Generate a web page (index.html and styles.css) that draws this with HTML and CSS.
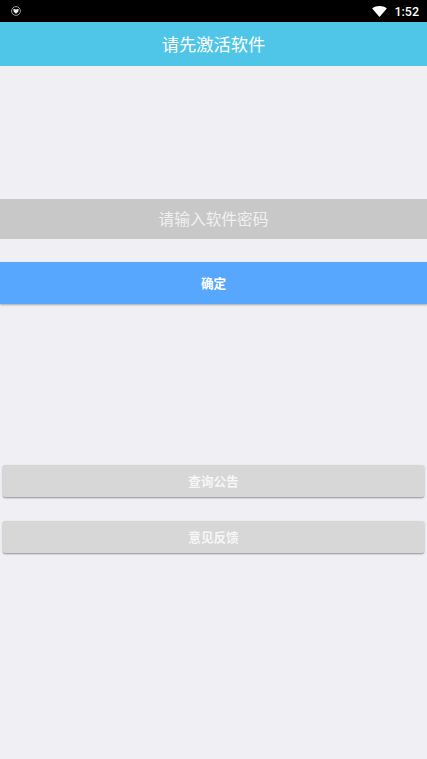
FILE: index.html
```html
<!DOCTYPE html>
<html lang="zh-CN">
<head>
  <meta charset="UTF-8" />
  <title>请先激活软件</title>
  <link rel="stylesheet" href="styles.css">
</head>
<body>
  <div class="status-bar">
    <svg class="shield" width="10" height="10" viewBox="0 0 10 10">
      <circle cx="5" cy="5" r="4.4" fill="none" stroke="#999" stroke-width="1"/>
      <path d="M2.4 2.8 L5 3.4 L7.6 2.8 L7.4 5.6 L5 7.8 L2.6 5.6 Z" fill="#eee"/>
    </svg>
    <div class="status-right">
      <svg class="wifi" width="15" height="11" viewBox="0 0 16 12">
        <path d="M0 2.6 C4.5 -0.8 11.5 -0.8 16 2.6 L8 12 Z" fill="#fff"/>
      </svg>
      <span class="clock">1:52</span>
    </div>
  </div>
  <div class="app-bar">请先激活软件</div>
  <div class="content">
    <div class="password">请输入软件密码</div>
    <button class="confirm">确定</button>
    <button class="grey-btn notice">查询公告</button>
    <button class="grey-btn feedback">意见反馈</button>
  </div>
</body>
</html>
```
FILE: styles.css
```css
body {
  margin: 0;
  height: 759px;
  overflow: hidden;
  background: #efeff4;
  font-family: "Liberation Sans", "Noto Sans CJK SC", sans-serif;
  color: #fff;
}
button {
  display: block;
  border: none;
  color: #fff;
  font-family: inherit;
  font-weight: bold;
  font-size: 12.6px;
  padding: 0 0 2px;
}
.status-bar {
  height: 22px;
  background: #000;
  display: flex;
  align-items: center;
  justify-content: space-between;
  padding: 0 8px 0 11px;
}
.status-right {
  display: flex;
  align-items: center;
  gap: 7px;
}
.clock {
  font-family: Roboto, sans-serif;
  font-size: 12.5px;
  font-weight: 500;
}
.app-bar {
  height: 44px;
  background: #4fc5e8;
  display: flex;
  align-items: center;
  justify-content: center;
  font-size: 17.3px;
  padding-bottom: 1px;
  box-sizing: border-box;
}
.content {
  display: flex;
  flex-direction: column;
}
.password {
  margin-top: 133px;
  height: 40px;
  box-sizing: border-box;
  padding-bottom: 1px;
  background: #c8c8c8;
  display: flex;
  align-items: center;
  justify-content: center;
  font-size: 15.7px;
  color: #f0f0f0;
}
.confirm {
  margin-top: 23px;
  height: 42px;
  width: 100%;
  background: #58a7ff;
  box-shadow: 0 1px 2px rgba(0, 0, 0, 0.3);
}
.grey-btn {
  margin: 0 3px;
  height: 32px;
  background: #d7d7d7;
  border-radius: 2px;
  box-shadow: 0 1px 2px rgba(0, 0, 0, 0.4);
  color: #f6f6f6;
}
.notice {
  margin-top: 161px;
}
.feedback {
  margin-top: 24px;
}
```
